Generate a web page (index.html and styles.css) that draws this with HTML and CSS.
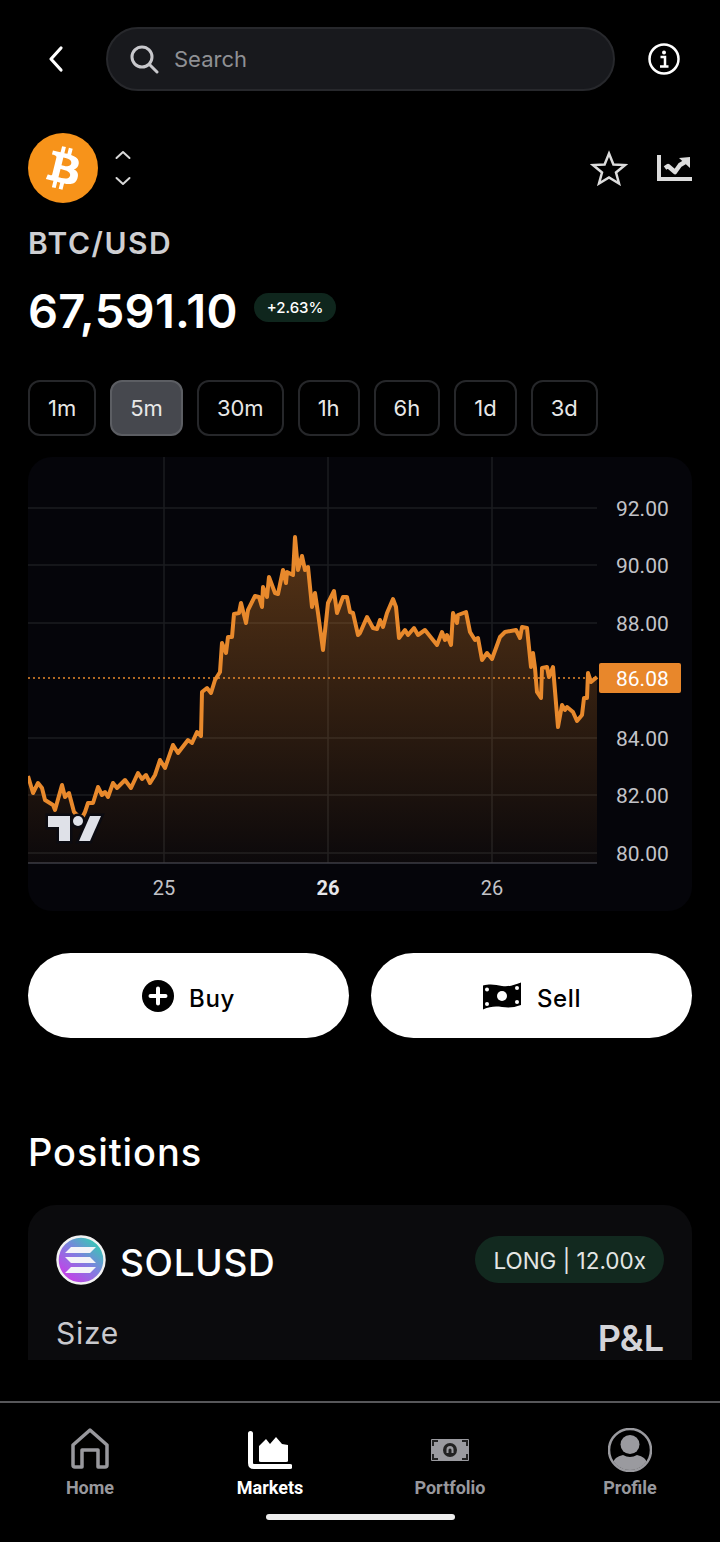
FILE: index.html
```html
<!DOCTYPE html>
<html lang="en">
<head>
    <meta charset="UTF-8">
    <meta name="viewport" content="width=device-width, initial-scale=1.0">
    <title>BTC/USD</title>
    <link rel="stylesheet" href="styles.css">
</head>
<body>
    <div class="content">
        <!-- Search bar -->
        <header class="top-bar">
            <svg class="back-icon" viewBox="0 0 20 28"><path d="M15 3 L5 14 L15 25"/></svg>
            <div class="search">
                <svg class="search-icon" viewBox="0 0 30 30"><circle cx="13" cy="13" r="10"/><path d="M20.5 20.5 L28 28"/></svg>
                <span>Search</span>
            </div>
            <svg class="info-icon" viewBox="0 0 32 32">
                <circle class="info-ring" cx="16" cy="16" r="14.5"/>
                <circle class="info-dot" cx="16" cy="9.5" r="2"/>
                <path class="info-stem" d="M12.5 14 H17 V23 M12 23.5 H20.5"/>
            </svg>
        </header>

        <!-- Coin header -->
        <section class="coin-row">
            <svg class="coin-logo" viewBox="0 0 32 32">
                <circle cx="16" cy="16" r="16" fill="#f7931a"/>
                <path fill="#fff" d="M23.189 14.02c.314-2.096-1.283-3.223-3.465-3.975l.708-2.84-1.728-.43-.69 2.765c-.454-.114-.92-.22-1.385-.326l.695-2.783L15.596 6l-.708 2.839c-.376-.086-.746-.17-1.104-.26l.002-.009-2.384-.595-.46 1.846s1.283.294 1.256.312c.7.175.826.638.805 1.006l-.806 3.235c.048.012.11.03.18.057l-.183-.045-1.13 4.532c-.086.212-.303.531-.793.41.018.025-1.256-.313-1.256-.313l-.858 1.978 2.25.561c.418.105.828.215 1.231.318l-.715 2.872 1.727.43.708-2.84c.472.127.93.245 1.378.357l-.706 2.828 1.728.43.715-2.866c2.948.558 5.164.333 6.097-2.333.752-2.146-.037-3.385-1.588-4.192 1.13-.26 1.98-1.003 2.207-2.538zm-3.95 5.538c-.533 2.147-4.148.986-5.32.695l.95-3.805c1.172.293 4.929.872 4.37 3.11zm.535-5.569c-.487 1.953-3.495.96-4.47.717l.86-3.45c.975.243 4.118.696 3.61 2.733z"/>
            </svg>
            <svg class="swap-icon" viewBox="0 0 16 36"><path d="M1.5 8 L8 2 L14.5 8 M1.5 28 L8 34 L14.5 28"/></svg>
            <div class="coin-actions">
                <svg class="star-icon" viewBox="0 0 38 36"><path d="M19 3.5 L23.4 14.5 L35 15 L26 22.5 L29 33.5 L19 27.5 L9 33.5 L12 22.5 L3 15 L14.6 14.5 Z"/></svg>
                <svg class="trend-icon" viewBox="0 0 35 26">
                    <path class="trend-axis" d="M2 0 V24 H35"/>
                    <path class="trend-line" d="M8 13 L11 11 L18 17 L23 10 L28 7"/>
                    <path class="trend-head" d="M22 3 L33 2 V13 Z"/>
                </svg>
            </div>
        </section>

        <h2 class="pair">BTC/USD</h2>
        <div class="price-row">
            <span class="price">67,591.10</span>
            <span class="change">+2.63%</span>
        </div>

        <!-- Timeframes -->
        <div class="timeframes">
            <button class="tf">1m</button>
            <button class="tf active">5m</button>
            <button class="tf">30m</button>
            <button class="tf">1h</button>
            <button class="tf">6h</button>
            <button class="tf">1d</button>
            <button class="tf">3d</button>
        </div>

        <!-- Chart: coordinates in the viewBox are screen pixels -->
        <div class="chart-card">
            <svg class="chart" viewBox="28 457 664 454">
                <defs>
                    <linearGradient id="areaFill" x1="0" y1="537" x2="0" y2="863" gradientUnits="userSpaceOnUse">
                        <stop offset="0" stop-color="#e8872b" stop-opacity="0.36"/>
                        <stop offset="1" stop-color="#e8872b" stop-opacity="0.03"/>
                    </linearGradient>
                </defs>

                <g class="grid">
                    <path d="M28 508 H597 M28 565 H597 M28 623 H597 M28 738 H597 M28 795 H597 M28 853 H597"/>
                    <path d="M164 457 V863 M328 457 V863 M492 457 V863"/>
                </g>
                <path class="axis" d="M28 863 H597"/>

                <path class="area" fill="url(#areaFill)" d="M28 776 L33 793 L38 783 L42 788 L45 800 L53 805 L55 810 L62 785 L65 797 L69 793 L74 812 L78 816 L83 816 L85 812 L88 803 L93 803 L98 787 L102 795 L105 792 L108 797 L113 783 L117 788 L125 780 L131 788 L138 773 L142 779 L146 775 L150 783 L155 775 L160 760 L165 768 L173 745 L178 753 L188 740 L192 743 L197 732 L201 736 L202 692 L207 688 L211 693 L215 680 L220 672 L222 643 L226 653 L228 637 L232 637 L234 614 L239 613 L241 603 L246 623 L248 610 L255 596 L259 597 L262 607 L263 587 L267 597 L269 577 L275 593 L278 594 L283 570 L286 583 L287 572 L293 575 L295 537 L298 570 L302 556 L305 570 L308 567 L312 607 L315 593 L318 613 L323 650 L328 603 L334 591 L337 613 L343 597 L347 597 L350 612 L353 613 L358 635 L360 633 L367 617 L373 628 L377 629 L380 620 L383 627 L387 613 L393 599 L396 607 L399 638 L405 630 L408 635 L414 628 L418 635 L425 630 L437 645 L442 632 L445 640 L447 635 L451 645 L453 613 L457 623 L458 615 L466 612 L470 632 L475 640 L478 638 L482 660 L487 653 L492 659 L500 637 L505 632 L516 630 L520 638 L522 627 L527 628 L531 667 L533 653 L535 668 L537 692 L541 698 L542 668 L547 667 L549 677 L553 667 L558 727 L562 705 L565 710 L567 707 L573 712 L577 721 L582 715 L584 698 L587 698 L588 673 L591 682 L597 677 V863 H28 Z"/>
                <path class="line" d="M28 776 L33 793 L38 783 L42 788 L45 800 L53 805 L55 810 L62 785 L65 797 L69 793 L74 812 L78 816 L83 816 L85 812 L88 803 L93 803 L98 787 L102 795 L105 792 L108 797 L113 783 L117 788 L125 780 L131 788 L138 773 L142 779 L146 775 L150 783 L155 775 L160 760 L165 768 L173 745 L178 753 L188 740 L192 743 L197 732 L201 736 L202 692 L207 688 L211 693 L215 680 L220 672 L222 643 L226 653 L228 637 L232 637 L234 614 L239 613 L241 603 L246 623 L248 610 L255 596 L259 597 L262 607 L263 587 L267 597 L269 577 L275 593 L278 594 L283 570 L286 583 L287 572 L293 575 L295 537 L298 570 L302 556 L305 570 L308 567 L312 607 L315 593 L318 613 L323 650 L328 603 L334 591 L337 613 L343 597 L347 597 L350 612 L353 613 L358 635 L360 633 L367 617 L373 628 L377 629 L380 620 L383 627 L387 613 L393 599 L396 607 L399 638 L405 630 L408 635 L414 628 L418 635 L425 630 L437 645 L442 632 L445 640 L447 635 L451 645 L453 613 L457 623 L458 615 L466 612 L470 632 L475 640 L478 638 L482 660 L487 653 L492 659 L500 637 L505 632 L516 630 L520 638 L522 627 L527 628 L531 667 L533 653 L535 668 L537 692 L541 698 L542 668 L547 667 L549 677 L553 667 L558 727 L562 705 L565 710 L567 707 L573 712 L577 721 L582 715 L584 698 L587 698 L588 673 L591 682 L597 677"/>
                <path class="last-price" d="M28 678 H597"/>

                <!-- TradingView mark -->
                <g class="tv-mark">
                    <path d="M48 816 H70 V841 H59 V827 H48 Z"/>
                    <circle cx="78" cy="821" r="5"/>
                    <path d="M90 816 H101 L90 841 H79 Z"/>
                </g>

                <g class="price-labels">
                    <text x="616" y="516">92.00</text>
                    <text x="616" y="573">90.00</text>
                    <text x="616" y="631">88.00</text>
                    <text x="616" y="746">84.00</text>
                    <text x="616" y="803">82.00</text>
                    <text x="616" y="861">80.00</text>
                </g>
                <rect class="price-tag" x="599" y="663" width="82" height="30" rx="2"/>
                <text class="price-tag-text" x="616" y="686">86.08</text>

                <g class="time-labels">
                    <text x="164" y="895">25</text>
                    <text class="bold" x="328" y="895">26</text>
                    <text x="492" y="895">26</text>
                </g>
            </svg>
        </div>

        <!-- Buy / Sell -->
        <div class="trade-buttons">
            <button class="trade-btn">
                <svg class="buy-icon" viewBox="0 0 32 32">
                    <circle cx="16" cy="16" r="16" fill="#000"/>
                    <path d="M16 8.5 V23.5 M8.5 16 H23.5" stroke="#fff" stroke-width="4" stroke-linecap="round"/>
                </svg>
                <span>Buy</span>
            </button>
            <button class="trade-btn">
                <svg class="sell-icon" viewBox="0 0 40 28">
                    <path fill="#000" d="M1 3.5 C9 1.5 14 3 20 4 C27 5 32 3 39 0.5 V23 C32 25.5 27 26 20 25 C13 24 8 24.5 1 27.5 Z"/>
                    <circle cx="20" cy="14" r="5" fill="#fff"/>
                    <circle cx="5" cy="7.5" r="2" fill="#fff"/>
                    <circle cx="35" cy="6" r="2" fill="#fff"/>
                    <circle cx="5" cy="22" r="2" fill="#fff"/>
                    <circle cx="35" cy="20" r="2" fill="#fff"/>
                </svg>
                <span>Sell</span>
            </button>
        </div>

        <h2 class="section-title">Positions</h2>

        <div class="position-card">
            <div class="position-head">
                <svg class="sol-logo" viewBox="0 0 50 50">
                    <defs>
                        <linearGradient id="solGrad" x1="0.9" y1="0.1" x2="0.2" y2="0.9">
                            <stop offset="0" stop-color="#2fd0b0"/>
                            <stop offset="0.5" stop-color="#7f7fe0"/>
                            <stop offset="1" stop-color="#c63fe8"/>
                        </linearGradient>
                    </defs>
                    <circle cx="25" cy="25" r="23.5" fill="url(#solGrad)" stroke="#f2f2f2" stroke-width="2.5"/>
                    <path fill="#f4f4f8" d="M15 12 H40 L34 18 H9 Z M9 22 H34 L40 28 H15 Z M15 32 H40 L34 38 H9 Z"/>
                </svg>
                <span class="symbol">SOLUSD</span>
                <span class="leverage">LONG | 12.00x</span>
            </div>
            <div class="position-labels">
                <span class="size-label">Size</span>
                <span class="pnl-label">P&amp;L</span>
            </div>
        </div>
    </div>

    <!-- Bottom navigation -->
    <nav class="bottom-nav">
        <a class="nav-item">
            <span class="nav-icon">
                <svg class="home-icon" viewBox="0 0 38 41" width="38" height="41">
                    <path class="home-path" d="M19 2 L36 17 V37 Q36 39 34 39 H27 V22 H11 V39 H4 Q2 39 2 37 V17 Z"/>
                </svg>
            </span>
            <span class="nav-label">Home</span>
        </a>
        <a class="nav-item current">
            <span class="nav-icon">
                <svg viewBox="0 0 44 38" width="44" height="38">
                    <path class="markets-axis" d="M2.5 2.5 V32 Q2.5 35.5 6 35.5 H42"/>
                    <path fill="#fff" d="M11 30 V15 L18 8 L22 13 L28 6 L34 13 L40 14 V30 Q40 31 38 31 H13 Q11 31 11 30 Z"/>
                </svg>
            </span>
            <span class="nav-label">Markets</span>
        </a>
        <a class="nav-item">
            <span class="nav-icon">
                <svg viewBox="0 0 38 22" width="38" height="22">
                    <rect width="38" height="22" rx="1" fill="#9a9a9f"/>
                    <circle cx="19" cy="11" r="7" fill="#222"/>
                    <path d="M15.5 14 V10.5 A3.5 3.5 0 0 1 22.5 10.5 V14 H20.5 V11 A1.5 1.5 0 0 0 17.5 11 V14 Z" fill="#9a9a9f"/>
                    <path d="M2 7 V2 H7 M31 2 H36 V7 M2 15 V20 H7 M31 20 H36 V15" fill="none" stroke="#222" stroke-width="2"/>
                </svg>
            </span>
            <span class="nav-label">Portfolio</span>
        </a>
        <a class="nav-item">
            <span class="nav-icon">
                <svg viewBox="0 0 44 44" width="44" height="44">
                    <defs><clipPath id="profileClip"><circle cx="22" cy="22" r="20"/></clipPath></defs>
                    <circle cx="22" cy="22" r="21" fill="none" stroke="#9a9a9f" stroke-width="2.5"/>
                    <g clip-path="url(#profileClip)" fill="#9a9a9f">
                        <circle cx="22" cy="16.5" r="9.5"/>
                        <path d="M5 44 V35 Q6 29 15 27 Q22 31 29 27 Q38 29 39 35 V44 Z"/>
                    </g>
                </svg>
            </span>
            <span class="nav-label">Profile</span>
        </a>
    </nav>
    <div class="home-indicator"></div>
</body>
</html>
```

FILE: styles.css
```css
* {
    margin: 0;
    padding: 0;
    box-sizing: border-box;
}

body {
    width: 720px;
    height: 1542px;
    background: #000;
    color: #fff;
    font-family: Inter, "Noto Sans", sans-serif;
    overflow: hidden;
}

svg {
    display: block;
    flex-shrink: 0;
}

.content {
    height: 1360px;
    padding: 27px 28px 0;
    overflow: hidden;
}

/* Top bar */
.top-bar {
    display: flex;
    align-items: center;
    height: 64px;
}

.back-icon {
    width: 20px;
    height: 28px;
    margin-left: 18px;
    fill: none;
    stroke: #fff;
    stroke-width: 3.2;
    stroke-linecap: round;
    stroke-linejoin: round;
}

.search {
    display: flex;
    align-items: center;
    gap: 15px;
    width: 509px;
    height: 64px;
    margin-left: 40px;
    padding-left: 21px;
    background: #18191d;
    border: 2px solid #27282c;
    border-radius: 32px;
    color: #8f9094;
    font-size: 22px;
}

.search-icon {
    width: 30px;
    height: 30px;
    fill: none;
    stroke: #c8c8cc;
    stroke-width: 3;
    stroke-linecap: round;
}

.info-icon {
    width: 32px;
    height: 32px;
    margin-left: 33px;
}

.info-ring,
.info-stem {
    fill: none;
    stroke: #fff;
    stroke-width: 2.5;
}

.info-dot {
    fill: #fff;
}

/* Coin */
.coin-row {
    display: flex;
    align-items: center;
    height: 70px;
    margin-top: 42px;
}

.coin-logo {
    width: 70px;
    height: 70px;
}

.swap-icon {
    width: 16px;
    height: 36px;
    margin-left: 17px;
    fill: none;
    stroke: #d8d8d8;
    stroke-width: 2;
    stroke-linecap: round;
    stroke-linejoin: round;
}

.coin-actions {
    display: flex;
    align-items: center;
    gap: 29px;
    margin-left: auto;
}

.star-icon {
    width: 38px;
    height: 36px;
    fill: none;
    stroke: #dcdcdc;
    stroke-width: 2.5;
    stroke-linejoin: miter;
}

.trend-icon {
    width: 35px;
    height: 26px;
}

.trend-axis {
    fill: none;
    stroke: #dcdcdc;
    stroke-width: 4;
}

.trend-line {
    fill: none;
    stroke: #dcdcdc;
    stroke-width: 4.5;
    stroke-linejoin: round;
}

.trend-head {
    fill: #dcdcdc;
}

.pair {
    margin-top: 22px;
    color: #cfcfd2;
    font-size: 30px;
    line-height: 36px;
    font-weight: 600;
    letter-spacing: 1.5px;
}

.price-row {
    display: flex;
    align-items: center;
    gap: 16px;
    height: 58px;
    margin-top: 20px;
}

.price {
    font-size: 47px;
    font-weight: 600;
    letter-spacing: 0.3px;
}

.change {
    display: flex;
    align-items: center;
    height: 29px;
    margin-top: -6px;
    padding: 0 13px;
    background: #0f261d;
    border-radius: 15px;
    font-size: 15px;
    font-weight: 500;
}

/* Timeframes */
.timeframes {
    display: flex;
    gap: 14px;
    margin-top: 41px;
}

.tf {
    height: 56px;
    padding: 0 18px;
    background: #000;
    border: 2px solid #26272a;
    border-radius: 12px;
    color: #e8e8e8;
    font-family: inherit;
    font-size: 22px;
}

.tf.active {
    background: #46484e;
    border-color: #5c5e63;
}

/* Chart */
.chart-card {
    height: 454px;
    margin-top: 21px;
    background: #05050a;
    border-radius: 24px;
    overflow: hidden;
}

.chart {
    width: 664px;
    height: 454px;
}

.grid path {
    fill: none;
    stroke: #1b1c21;
    stroke-width: 1.5;
}

.axis {
    fill: none;
    stroke: #3a3b44;
    stroke-width: 1.5;
}

.line {
    fill: none;
    stroke: #e8892c;
    stroke-width: 4;
    stroke-linejoin: round;
}

.last-price {
    fill: none;
    stroke: #e8892c;
    stroke-width: 1.5;
    stroke-dasharray: 2 3;
}

.tv-mark {
    fill: #dfe1e8;
    stroke: #0b0b11;
    stroke-width: 5;
    paint-order: stroke;
}

.chart text {
    font-family: Roboto, sans-serif;
    font-size: 21px;
    fill: #c2c3c8;
}

.price-tag {
    fill: #e8872b;
}

.chart .price-tag-text {
    fill: #fff;
}

.time-labels text {
    font-size: 20px;
    text-anchor: middle;
}

.chart .time-labels .bold {
    fill: #e6e6ea;
    font-weight: 700;
}

/* Buy / Sell */
.trade-buttons {
    display: flex;
    gap: 22px;
    margin-top: 42px;
}

.trade-btn {
    display: flex;
    flex: 1;
    align-items: center;
    justify-content: center;
    gap: 15px;
    height: 85px;
    background: #fff;
    border: none;
    border-radius: 43px;
    color: #000;
    font-family: inherit;
    font-size: 24px;
    font-weight: 500;
    letter-spacing: 0.6px;
}

.trade-btn span {
    margin-top: 5px;
}

.buy-icon {
    width: 32px;
    height: 32px;
}

.sell-icon {
    width: 40px;
    height: 28px;
}

/* Positions */
.section-title {
    margin-top: 91px;
    font-size: 38px;
    line-height: 46px;
    font-weight: 500;
    letter-spacing: 0.9px;
}

.position-card {
    height: 200px;
    margin-top: 30px;
    padding: 31px 28px 0;
    background: #0b0b0d;
    border-radius: 28px;
}

.position-head {
    display: flex;
    align-items: center;
    height: 47px;
}

.sol-logo {
    width: 50px;
    height: 50px;
}

.symbol {
    margin-top: 5px;
    margin-left: 14px;
    font-size: 37px;
    font-weight: 500;
    letter-spacing: 0.7px;
}

.leverage {
    display: flex;
    align-items: center;
    height: 47px;
    margin-left: auto;
    padding: 2px 18px 0;
    background: #12291f;
    border-radius: 24px;
    color: #e4e6e4;
    font-size: 22.5px;
}

.position-labels {
    display: flex;
    justify-content: space-between;
    margin-top: 30px;
}

.size-label {
    color: #c9c9cd;
    font-size: 30px;
    line-height: 40px;
    letter-spacing: 0.7px;
}

.pnl-label {
    margin-top: 5px;
    color: #d4d4d8;
    font-size: 36px;
    line-height: 40px;
    font-weight: 600;
}

/* Bottom navigation */
.bottom-nav {
    display: flex;
    height: 113px;
    margin-top: 41px;
    padding-top: 25px;
    border-top: 2px solid #57575a;
}

.nav-item {
    display: flex;
    flex: 1;
    flex-direction: column;
    align-items: center;
    gap: 5px;
    color: #98989d;
    font-family: Roboto, sans-serif;
    font-size: 18px;
    font-weight: 700;
}

.nav-icon {
    display: flex;
    align-items: center;
    height: 44px;
}

.nav-label {
    line-height: 22px;
}

.nav-item.current {
    color: #fff;
}

.home-icon {
    margin-bottom: 3px;
}

.home-path {
    fill: none;
    stroke: #98989d;
    stroke-width: 3.5;
    stroke-linejoin: round;
}

.markets-axis {
    fill: none;
    stroke: #fff;
    stroke-width: 5;
    stroke-linecap: round;
}

.home-indicator {
    width: 189px;
    height: 6px;
    margin: 0 auto;
    background: #eee;
    border-radius: 3px;
}
```
